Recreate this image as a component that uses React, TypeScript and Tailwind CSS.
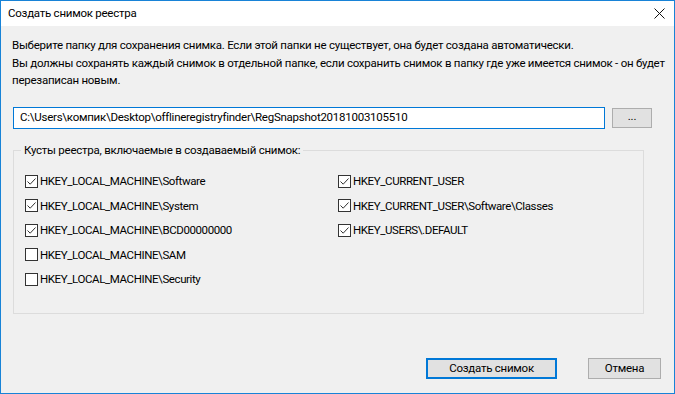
import React from 'react';

const FONT = 'Roboto, "Liberation Sans", sans-serif';

const LEFT_KEYS = [
  { label: 'HKEY_LOCAL_MACHINE\\Software', checked: true },
  { label: 'HKEY_LOCAL_MACHINE\\System', checked: true },
  { label: 'HKEY_LOCAL_MACHINE\\BCD00000000', checked: true },
  { label: 'HKEY_LOCAL_MACHINE\\SAM', checked: false },
  { label: 'HKEY_LOCAL_MACHINE\\Security', checked: false },
];

const RIGHT_KEYS = [
  { label: 'HKEY_CURRENT_USER', checked: true },
  { label: 'HKEY_CURRENT_USER\\Software\\Classes', checked: true },
  { label: 'HKEY_USERS\\.DEFAULT', checked: true },
];

function CheckRow({ label, checked }: { label: string; checked: boolean }) {
  return (
    <div className="flex items-center h-[24.5px]">
      <span className="w-[13px] h-[13px] border border-[#333] bg-white flex items-center justify-center shrink-0">
        {checked && (
          <svg width="11" height="11" viewBox="0 0 11 11">
            <path d="M1.5 5.5 L4.2 8.2 L9.5 2.5" fill="none" stroke="#333" strokeWidth="1" />
          </svg>
        )}
      </span>
      <span className="ml-[2px] leading-[16px] tracking-[-0.4px]">{label}</span>
    </div>
  );
}

export default function App() {
  return (
    <div
      className="w-[675px] h-[394px] border border-[#1883d7] bg-[#f0f0f0] flex flex-col text-[11.5px] tracking-[-0.25px] text-black"
      style={{ fontFamily: FONT }}
    >
      <div className="h-[25px] bg-white flex items-center justify-between pl-[7px] pr-[9px] shrink-0">
        <span>Создать снимок реестра</span>
        <svg width="11" height="11" viewBox="0 0 11 11">
          <path d="M0.5 0.5 L10.5 10.5 M10.5 0.5 L0.5 10.5" stroke="#111" strokeWidth="1" />
        </svg>
      </div>

      <div className="flex-1 flex flex-col px-[11px] whitespace-nowrap">
        <p className="mt-[10px] leading-[18px]">
          Выберите папку для сохранения снимка. Если этой папки не существует, она будет создана автоматически.
        </p>
        <p className="mt-[1px] leading-[17px]">
          Вы должны сохранять каждый снимок в отдельной папке, если сохранить снимок в папку где уже имеется снимок - он будет
          <br />
          перезаписан новым.
        </p>

        <div className="mt-[18px] flex items-center">
          <div className="w-[592px] h-[22px] border border-[#0078d7] bg-white flex items-center pl-[6px] ml-[1px]">
            C:\Users\компик\Desktop\offlineregistryfinder\RegSnapshot20181003105510
          </div>
          <button className="ml-[7px] w-[40px] h-[20px] bg-[#e1e1e1] border border-[#adadad] leading-none pb-[3px]">
            ...
          </button>
        </div>

        <fieldset className="mt-[14px] ml-[1px] w-[631px] h-[171px] border border-[#dcdcdc] px-[11px]">
          <legend className="ml-[-4px] px-[3px] leading-[14px]">
            Кусты реестра, включаемые в создаваемый снимок:
          </legend>
          <div className="flex mt-[12px]">
            <div className="w-[313px] flex flex-col">
              {LEFT_KEYS.map((k) => (
                <CheckRow key={k.label} label={k.label} checked={k.checked} />
              ))}
            </div>
            <div className="flex flex-col">
              {RIGHT_KEYS.map((k) => (
                <CheckRow key={k.label} label={k.label} checked={k.checked} />
              ))}
            </div>
          </div>
        </fieldset>

        <div className="flex-1" />
        <div className="flex justify-end gap-[31px] pr-[2px] mb-[14px]">
          <button className="w-[131px] h-[21px] bg-[#e1e1e1] border-2 border-[#0078d7] leading-none">
            Создать снимок
          </button>
          <button className="w-[73px] h-[21px] bg-[#e1e1e1] border border-[#adadad] leading-none">
            Отмена
          </button>
        </div>
      </div>
    </div>
  );
}
